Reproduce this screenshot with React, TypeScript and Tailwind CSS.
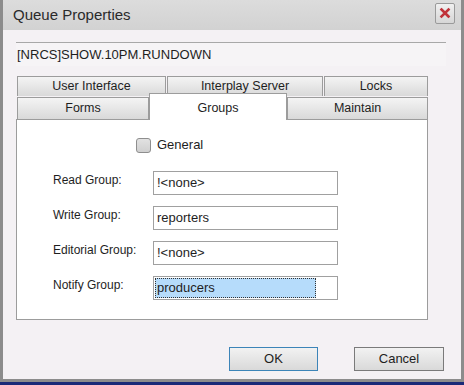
import React from 'react'

const font = { fontFamily: '"Liberation Sans", Arial, sans-serif' }

type TabProps = {
  label: string
  width: string
}

const Tab = ({ label, width }: TabProps) => (
  <div
    className={`${width} flex h-full items-center justify-center border border-b-0 border-[#9c9c9c] bg-gradient-to-b from-[#f4f4f4] to-[#d9d9d9] text-[12.5px] text-[#1e1e1e]`}
  >
    {label}
  </div>
)

const fields = [
  { label: 'Read Group:', value: '!<none>' },
  { label: 'Write Group:', value: 'reporters' },
  { label: 'Editorial Group:', value: '!<none>' },
  { label: 'Notify Group:', value: 'producers', selected: true },
]

export default function App() {
  return (
    <div className="flex h-[385px] w-[464px] flex-col bg-[#1b2a78]" style={font}>
      <div className="flex h-[382px] flex-col border-x-[3px] border-b-[3px] border-[#8c8c8c] bg-[#f4f1f4]">
        {/* title bar */}
        <div className="flex h-[30px] shrink-0 items-center justify-between bg-gradient-to-b from-[#dcdcdc] to-[#d2d2d2] pl-[10px] pr-[6px]">
          <span className="text-[15px] text-[#2a2a2a]">Queue Properties</span>
          <div className="mb-[4px] flex h-[21px] w-[20px] items-center justify-center rounded-[2px] border border-[#9a9a9a] bg-gradient-to-b from-[#f0f0f0] to-[#d6d6d6]">
            <svg width="12" height="12" viewBox="0 0 12 12">
              <path d="M2.5 2.5 L9.5 9.5 M9.5 2.5 L2.5 9.5" stroke="#c0323a" strokeWidth="2.6" strokeLinecap="square" />
            </svg>
          </div>
        </div>

        <div className="flex flex-1 flex-col pl-[13px] pr-[15px] pt-[12px]">
          {/* queue path */}
          <div className="flex h-[24px] w-[430px] items-center border-t border-[#a8a8a8] bg-[#f6f4f6] pl-[1px] text-[13px] text-[#1e1e1e]">
            [NRCS]SHOW.10PM.RUNDOWN
          </div>

          {/* tabs */}
          <div className="mt-[10px] flex w-[412px] flex-col">
            <div className="flex h-[20px] gap-[1px] pl-[1px]">
              <Tab label="User Interface" width="w-[149px]" />
              <Tab label="Interplay Server" width="w-[156px]" />
              <Tab label="Locks" width="w-[104px]" />
            </div>
            <div className="-mt-[4px] flex h-[27px] items-end pl-[1px]">
              <div className="h-[22px]">
                <Tab label="Forms" width="w-[132px]" />
              </div>
              <div className="relative z-10 -mb-[1px] flex h-[27px] w-[138px] items-start justify-center border border-b-0 border-[#9c9c9c] bg-white pt-[5px] text-[12.5px] text-[#1e1e1e]">
                Groups
              </div>
              <div className="h-[22px]">
                <Tab label="Maintain" width="w-[141px]" />
              </div>
            </div>

            {/* panel */}
            <div className="flex h-[201px] flex-col border border-[#9c9c9c] bg-white pt-[17px]">
              <label className="ml-[119px] flex h-[16px] items-center gap-[6px] text-[13px] text-[#1e1e1e]">
                <span className="h-[15px] w-[15px] rounded-[3px] border border-[#8e8e8e] bg-gradient-to-b from-[#e2e2e2] to-[#cfcfcf]" />
                General
              </label>

              <div className="mt-[18px] flex flex-col gap-[11px]">
                {fields.map((f) => (
                  <div key={f.label} className="flex items-start">
                    <span className="w-[136px] shrink-0 whitespace-nowrap pl-[36px] pt-[1px] text-[12px] leading-[16px] text-[#1e1e1e]">
                      {f.label}
                    </span>
                    <div className="flex h-[24px] w-[185px] items-center border border-[#a0a0a0] bg-white px-[1px] text-[13px] text-[#1e1e1e]">
                      {f.selected ? (
                        <span className="flex h-[20px] w-[161px] items-center border border-dotted border-[#333] bg-[#b6dcfb] pl-[1px]">
                          {f.value}
                        </span>
                      ) : (
                        <span className="pl-[2px]">{f.value}</span>
                      )}
                    </div>
                  </div>
                ))}
              </div>
            </div>
          </div>

          {/* buttons */}
          <div className="mt-[27px] flex justify-end gap-[36px] pr-[2px]">
            <button className="h-[24px] w-[89px] border border-[#3c84b8] bg-gradient-to-b from-[#f2f2f2] to-[#d9d9d9] text-[13px] text-[#1e1e1e]">
              OK
            </button>
            <button className="h-[24px] w-[90px] border border-[#7a7a7a] bg-gradient-to-b from-[#f2f2f2] to-[#d9d9d9] text-[13px] text-[#1e1e1e]">
              Cancel
            </button>
          </div>
        </div>
      </div>
    </div>
  )
}
